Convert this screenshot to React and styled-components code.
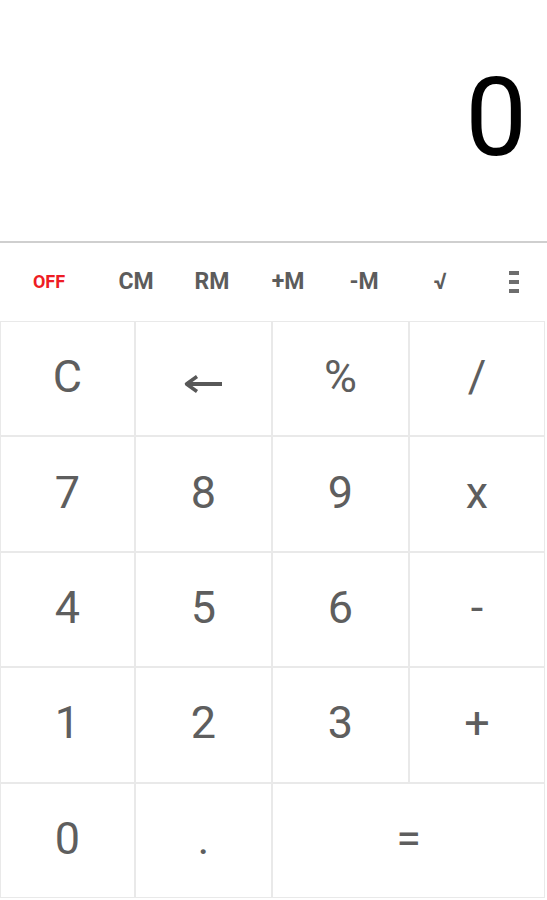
import styled, { createGlobalStyle } from "styled-components";

const GlobalStyle = createGlobalStyle`
	html, body {
		margin: 0;
		padding: 0;
		background: #fff;
	}
	body {
		font-family: Roboto, "Liberation Sans", sans-serif;
	}
`;

const Calculator = styled.div`
	width: 547px;
	height: 900px;
	display: flex;
	flex-direction: column;
	background: #fff;
`;

const Display = styled.div`
	height: 243px;
	flex-shrink: 0;
	display: flex;
	align-items: center;
	justify-content: flex-end;
	padding: 0 20px 6px 0;
	box-sizing: border-box;
	border-bottom: 2px solid #cfcfcf;
	font-size: 110px;
	line-height: 1;
	color: #000;
`;

const MemoryRow = styled.div`
	height: 78px;
	flex-shrink: 0;
	display: grid;
	grid-template-columns: 98px repeat(5, 76px) 1fr;
	align-items: center;
	justify-items: center;
`;

const MemoryKey = styled.div`
	font-size: ${(props) => (props.small ? "18px" : "23px")};
	font-weight: 700;
	color: ${(props) => (props.red ? "#ee1c24" : "#5c5c5c")};
	margin-bottom: 2px;
`;

const MenuIcon = styled.div`
	display: flex;
	flex-direction: column;
	gap: 5.5px;
	margin-left: 2px;

	span {
		display: block;
		width: 10px;
		height: 3.5px;
		background: #6e6e6e;
	}
`;

const Keypad = styled.div`
	flex: 1;
	display: grid;
	grid-template-columns: 135px 137px 137px 136px;
	grid-template-rows: repeat(5, 1fr);
	padding-bottom: 2px;
`;

const Key = styled.div`
	grid-column: span ${(props) => props.span || 1};
	display: flex;
	align-items: center;
	justify-content: center;
	border: 1px solid #e9e9e9;
	font-size: 45px;
	color: #5e5e5e;
	padding-top: ${(props) => props.drop || 0}px;
	padding-bottom: 4px;
`;

const BackArrow = () => (
	<svg width="41" height="18" viewBox="0 0 41 18">
		<path d="M5 9H39" stroke="#585858" strokeWidth="4" />
		<path
			d="M14 1.5L3.5 9L14 16.5"
			fill="none"
			stroke="#585858"
			strokeWidth="3.5"
			strokeLinejoin="round"
		/>
	</svg>
);

const keys = [
	["C"],
	["back", 1, 14],
	["%"],
	["/"],
	["7"],
	["8"],
	["9"],
	["x"],
	["4"],
	["5"],
	["6"],
	["-"],
	["1"],
	["2"],
	["3"],
	["+"],
	["0"],
	["."],
	["=", 2],
];

export default function App() {
	return (
		<>
			<GlobalStyle />
			<Calculator>
				<Display>0</Display>
				<MemoryRow>
					<MemoryKey red small>
						OFF
					</MemoryKey>
					<MemoryKey>CM</MemoryKey>
					<MemoryKey>RM</MemoryKey>
					<MemoryKey>+M</MemoryKey>
					<MemoryKey>-M</MemoryKey>
					<MemoryKey>√</MemoryKey>
					<MenuIcon>
						<span />
						<span />
						<span />
					</MenuIcon>
				</MemoryRow>
				<Keypad>
					{keys.map(([label, span, drop]) => (
						<Key key={label} span={span} drop={drop}>
							{label === "back" ? <BackArrow /> : label}
						</Key>
					))}
				</Keypad>
			</Calculator>
		</>
	);
}
